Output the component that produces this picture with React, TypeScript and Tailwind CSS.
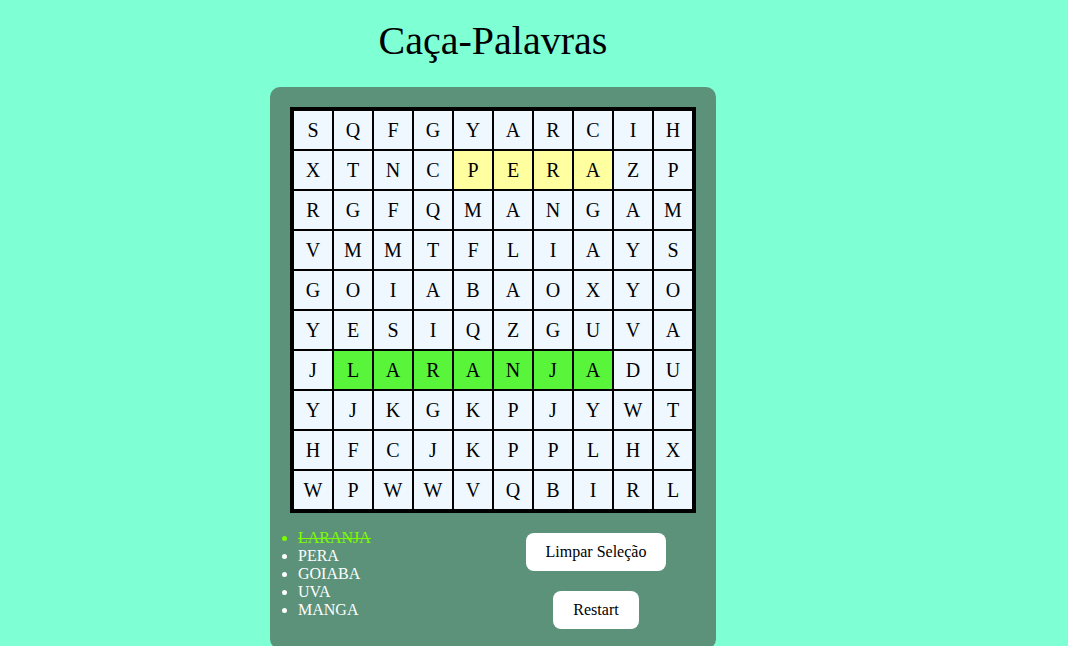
const grid = [
  'SQFGYARCIH',
  'XTNCPERAZP',
  'RGFQMANGAM',
  'VMMTFLIAYS',
  'GOIABAOXYO',
  'YESIQZGUVA',
  'JLARANJADU',
  'YJKGKPJYWT',
  'HFCJKPPLHX',
  'WPWWVQBIRL',
]

// selected = current selection (yellow), found = word already found (green)
const selected = new Set(['1-4', '1-5', '1-6', '1-7'])
const found = new Set(['6-1', '6-2', '6-3', '6-4', '6-5', '6-6', '6-7'])

const words = [
  { name: 'LARANJA', found: true },
  { name: 'PERA', found: false },
  { name: 'GOIABA', found: false },
  { name: 'UVA', found: false },
  { name: 'MANGA', found: false },
]

function Cell({ letter, row, col }: { letter: string; row: number; col: number }) {
  const key = `${row}-${col}`
  let bg = 'bg-[#f0f8ff]'
  if (found.has(key)) bg = 'bg-[#59f53b]'
  else if (selected.has(key)) bg = 'bg-[#ffff9f]'
  return (
    <div className={`w-10 h-10 border border-black flex items-center justify-center pb-px text-[20px] text-black cursor-pointer select-none ${bg}`}>
      {letter}
    </div>
  )
}

export default function App() {
  return (
    <div className="min-h-[646px] bg-[#7fffd4] font-['Liberation_Serif',serif] overflow-hidden">
      <div className="ml-[270px] w-[446px] flex flex-col">
        <h1 className="pt-[18px] mb-[23px] text-[40px] leading-[46px] text-center text-black">Caça-Palavras</h1>
        <div className="bg-[#5c927a] rounded-[10px] p-5">
          <div className="grid grid-cols-10 w-fit border-[3px] border-black">
            {grid.map((line, r) =>
              line.split('').map((ch, c) => <Cell key={`${r}-${c}`} letter={ch} row={r} col={c} />)
            )}
          </div>
          <div className="flex mt-4">
            <ul className="w-[206px] list-disc pl-2 text-[16px] leading-[18px]">
              {words.map((w) => (
                <li key={w.name} className={w.found ? 'text-[#7cfc00] line-through' : 'text-white'}>
                  {w.name}
                </li>
              ))}
            </ul>
            <div className="flex-1 flex flex-col items-center gap-5 pt-1">
              <button className="bg-white text-black text-[16px] leading-[18px] px-5 py-2.5 rounded-lg">
                Limpar Seleção
              </button>
              <button className="bg-white text-black text-[16px] leading-[18px] px-5 py-2.5 rounded-lg">
                Restart
              </button>
            </div>
          </div>
        </div>
      </div>
    </div>
  )
}
